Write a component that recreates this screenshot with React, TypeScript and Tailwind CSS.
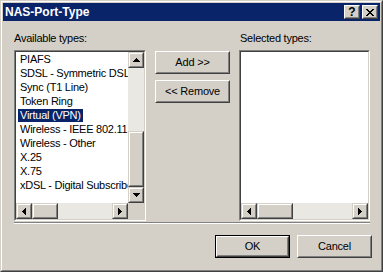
import React from "react";

const leftItems = [
  "PIAFS",
  "SDSL - Symmetric DSL",
  "Sync (T1 Line)",
  "Token Ring",
  "Virtual (VPN)",
  "Wireless - IEEE 802.11",
  "Wireless - Other",
  "X.25",
  "X.75",
  "xDSL - Digital Subscriber Line",
];

// tiny bitmap glyphs, like the classic 3D-frame arrows
const UP = ["...#...", "..###..", ".#####.", "#######"];
const DOWN = ["#######", ".#####.", "..###..", "...#..."];
const LEFT = ["...#", "..##", ".###", "####", ".###", "..##", "...#"];
const RIGHT = ["#...", "##..", "###.", "####", "###.", "##..", "#..."];
const CLOSE = ["##....##", ".##..##.", "..####..", "...##...", "..####..", ".##..##.", "##....##"];

const Bits = ({ rows }: { rows: string[] }) => (
  <svg width={rows[0].length} height={rows.length} shapeRendering="crispEdges">
    {rows.flatMap((r, y) =>
      r.split("").map((c, x) =>
        c === "#" ? <rect key={`${x}-${y}`} x={x} y={y} width={1} height={1} fill="#000" /> : null
      )
    )}
  </svg>
);

// scrollbar style bevel
const Raised = ({ className = "", children }: { className?: string; children?: React.ReactNode }) => (
  <div className={`border border-t-[#d4d0c8] border-l-[#d4d0c8] border-r-[#404040] border-b-[#404040] bg-[#d4d0c8] ${className}`}>
    <div className="w-full h-full border border-t-white border-l-white border-r-[#808080] border-b-[#808080] flex items-center justify-center">
      {children}
    </div>
  </div>
);

const PushButton = ({ label, isDefault }: { label: string; isDefault?: boolean }) => {
  const inner = (
    <div className="w-full h-full border border-t-white border-l-white border-r-[#404040] border-b-[#404040]">
      <div className="w-full h-full border border-t-[#d4d0c8] border-l-[#d4d0c8] border-r-[#808080] border-b-[#808080] flex items-center justify-center text-[11px] tracking-[-0.2px] text-black">
        {label}
      </div>
    </div>
  );
  if (isDefault) {
    return <div className="w-[75px] h-[23px] border border-black bg-[#d4d0c8]">{inner}</div>;
  }
  return <div className="w-[75px] h-[23px] bg-[#d4d0c8]">{inner}</div>;
};

const Track = "bg-[#eae8e3]";

const HScroll = ({ width, thumb }: { width: number; thumb: number }) => (
  <div className="flex h-[16px]" style={{ width }}>
    <Raised className="w-[16px] h-[16px] shrink-0">
      <Bits rows={LEFT} />
    </Raised>
    <div className={`flex-1 flex ${Track}`}>
      <Raised className="h-[16px] shrink-0">
        <div style={{ width: thumb - 4 }} />
      </Raised>
    </div>
    <Raised className="w-[16px] h-[16px] shrink-0">
      <Bits rows={RIGHT} />
    </Raised>
  </div>
);

const Sunken = ({ className = "", children }: { className?: string; children?: React.ReactNode }) => (
  <div className={`border border-t-[#808080] border-l-[#808080] border-r-white border-b-white ${className}`}>
    <div className="w-full h-full border border-t-[#404040] border-l-[#404040] border-r-[#d4d0c8] border-b-[#d4d0c8]">
      {children}
    </div>
  </div>
);

export default function App() {
  return (
    <div className="w-[383px] h-[272px] bg-[#d4d0c8] font-['Liberation_Sans',Arial,sans-serif] text-black select-none">
      <div className="w-full h-full border border-t-[#d4d0c8] border-l-[#d4d0c8] border-r-[#404040] border-b-[#404040]">
        <div className="w-full h-full border border-t-white border-l-white border-r-[#808080] border-b-[#808080] p-[1px] flex flex-col">
          {/* title bar */}
          <div className="h-[18px] bg-[#0a246a] flex items-center justify-between pl-[2px] pr-[2px]">
            <span className="text-white font-bold text-[12px] leading-[18px]">NAS-Port-Type</span>
            <div className="flex gap-[2px]">
              <div className="w-[16px] h-[14px] border border-t-white border-l-white border-r-[#404040] border-b-[#404040] bg-[#d4d0c8]">
                <div className="w-full h-full border border-t-[#d4d0c8] border-l-[#d4d0c8] border-r-[#808080] border-b-[#808080] flex items-center justify-center text-[12px] font-bold leading-none">
                  ?
                </div>
              </div>
              <div className="w-[16px] h-[14px] border border-t-white border-l-white border-r-[#404040] border-b-[#404040] bg-[#d4d0c8]">
                <div className="w-full h-full border border-t-[#d4d0c8] border-l-[#d4d0c8] border-r-[#808080] border-b-[#808080] flex items-center justify-center">
                  <Bits rows={CLOSE} />
                </div>
              </div>
            </div>
          </div>

          {/* body */}
          <div className="flex pl-[11px] pt-[11px] gap-[9px] text-[11px] tracking-[-0.25px]">
            <div className="w-[132px] flex flex-col">
              <div className="leading-[13px] h-[13px] mb-[5px]">Available types:</div>
              <Sunken className="w-[132px] h-[171px]">
                <div className="grid grid-cols-[112px_16px] grid-rows-[151px_16px]">
                  <div className="bg-white overflow-hidden">
                    {leftItems.map((it) => (
                      <div key={it} className="h-[14px] pl-[2px] whitespace-nowrap leading-[14px]">
                        {it === "Virtual (VPN)" ? (
                          <span className="inline-block h-[13px] leading-[13px] px-[2px] bg-[#0a246a] text-white">{it}</span>
                        ) : (
                          <span className="px-[2px]">{it}</span>
                        )}
                      </div>
                    ))}
                  </div>
                  <div className="flex flex-col">
                    <Raised className="w-[16px] h-[16px] shrink-0">
                      <Bits rows={UP} />
                    </Raised>
                    <div className={`flex-1 flex flex-col justify-end ${Track}`}>
                      <Raised className="w-[16px] h-[56px]" />
                    </div>
                    <Raised className="w-[16px] h-[16px] shrink-0">
                      <Bits rows={DOWN} />
                    </Raised>
                  </div>
                  <HScroll width={112} thumb={26} />
                  <div className="bg-[#d4d0c8]" />
                </div>
              </Sunken>
            </div>

            <div className="w-[75px] flex flex-col gap-[6px] pt-[19px]">
              <PushButton label="Add >>" />
              <PushButton label="<< Remove" />
            </div>

            <div className="w-[131px] flex flex-col">
              <div className="leading-[13px] h-[13px] mb-[5px] pl-[1px]">Selected types:</div>
              <Sunken className="w-[131px] h-[171px]">
                <div className="flex flex-col">
                  <div className="h-[151px] bg-white" />
                  <HScroll width={127} thumb={36} />
                </div>
              </Sunken>
            </div>
          </div>

          <div className="ml-[11px] mt-[1px] w-[356px] border-t border-t-[#808080] border-b border-b-white" />

          <div className="flex justify-end gap-[7px] pr-[8px] mt-[11px]">
            <PushButton label="OK" isDefault />
            <PushButton label="Cancel" />
          </div>
        </div>
      </div>
    </div>
  );
}
